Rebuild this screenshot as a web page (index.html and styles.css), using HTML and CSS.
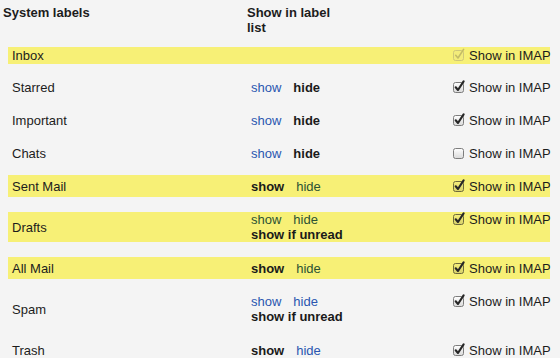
FILE: index.html
```html
<!DOCTYPE html>
<html lang="en">
<head>
  <meta charset="UTF-8">
  <title>Labels</title>
  <link rel="stylesheet" href="styles.css">
</head>
<body>
  <svg class="defs" width="0" height="0">
    <defs>
      <linearGradient id="cbfill" x1="0" y1="0" x2="0" y2="1">
        <stop offset="0" stop-color="#ffffff"/>
        <stop offset="1" stop-color="#d9d9d9"/>
      </linearGradient>
      <linearGradient id="cbfill-hl" x1="0" y1="0" x2="0" y2="1">
        <stop offset="0" stop-color="#f6ef7a"/>
        <stop offset="1" stop-color="#d6d06a"/>
      </linearGradient>
    </defs>
  </svg>

  <div class="labels">
    <div class="head">
      <div class="col-name">System labels</div>
      <div class="col-show">Show in label list</div>
    </div>

    <div class="row hl short">
      <div class="name">Inbox</div>
      <div class="vis"></div>
      <div class="imap disabled">
        <svg class="cb" width="12" height="13" viewBox="0 0 12 13"><rect class="box" x="0.5" y="2.5" width="10" height="10" rx="2"/><path class="mark" d="M2.7 7.3 L5 10 L10.6 1.4"/></svg>
        <span>Show in IMAP</span>
      </div>
    </div>

    <div class="row">
      <div class="name">Starred</div>
      <div class="vis"><a href="#">show</a><b>hide</b></div>
      <div class="imap">
        <svg class="cb" width="12" height="13" viewBox="0 0 12 13"><rect class="box" x="0.5" y="2.5" width="10" height="10" rx="2"/><path class="mark" d="M2.7 7.3 L5 10 L10.6 1.4"/></svg>
        <span>Show in IMAP</span>
      </div>
    </div>

    <div class="row">
      <div class="name">Important</div>
      <div class="vis"><a href="#">show</a><b>hide</b></div>
      <div class="imap">
        <svg class="cb" width="12" height="13" viewBox="0 0 12 13"><rect class="box" x="0.5" y="2.5" width="10" height="10" rx="2"/><path class="mark" d="M2.7 7.3 L5 10 L10.6 1.4"/></svg>
        <span>Show in IMAP</span>
      </div>
    </div>

    <div class="row">
      <div class="name">Chats</div>
      <div class="vis"><a href="#">show</a><b>hide</b></div>
      <div class="imap off">
        <svg class="cb" width="12" height="13" viewBox="0 0 12 13"><rect class="box" x="0.5" y="2.5" width="10" height="10" rx="2"/><path class="mark" d="M2.7 7.3 L5 10 L10.6 1.4"/></svg>
        <span>Show in IMAP</span>
      </div>
    </div>

    <div class="row hl">
      <div class="name">Sent Mail</div>
      <div class="vis"><b>show</b><a href="#">hide</a></div>
      <div class="imap">
        <svg class="cb" width="12" height="13" viewBox="0 0 12 13"><rect class="box" x="0.5" y="2.5" width="10" height="10" rx="2"/><path class="mark" d="M2.7 7.3 L5 10 L10.6 1.4"/></svg>
        <span>Show in IMAP</span>
      </div>
    </div>

    <div class="row hl two">
      <div class="name">Drafts</div>
      <div class="vis"><a href="#">show</a><a href="#">hide</a><br><b>show if unread</b></div>
      <div class="imap">
        <svg class="cb" width="12" height="13" viewBox="0 0 12 13"><rect class="box" x="0.5" y="2.5" width="10" height="10" rx="2"/><path class="mark" d="M2.7 7.3 L5 10 L10.6 1.4"/></svg>
        <span>Show in IMAP</span>
      </div>
    </div>

    <div class="row hl">
      <div class="name">All Mail</div>
      <div class="vis"><b>show</b><a href="#">hide</a></div>
      <div class="imap">
        <svg class="cb" width="12" height="13" viewBox="0 0 12 13"><rect class="box" x="0.5" y="2.5" width="10" height="10" rx="2"/><path class="mark" d="M2.7 7.3 L5 10 L10.6 1.4"/></svg>
        <span>Show in IMAP</span>
      </div>
    </div>

    <div class="row two">
      <div class="name">Spam</div>
      <div class="vis"><a href="#">show</a><a href="#">hide</a><br><b>show if unread</b></div>
      <div class="imap">
        <svg class="cb" width="12" height="13" viewBox="0 0 12 13"><rect class="box" x="0.5" y="2.5" width="10" height="10" rx="2"/><path class="mark" d="M2.7 7.3 L5 10 L10.6 1.4"/></svg>
        <span>Show in IMAP</span>
      </div>
    </div>

    <div class="row">
      <div class="name">Trash</div>
      <div class="vis"><b>show</b><a href="#">hide</a></div>
      <div class="imap">
        <svg class="cb" width="12" height="13" viewBox="0 0 12 13"><rect class="box" x="0.5" y="2.5" width="10" height="10" rx="2"/><path class="mark" d="M2.7 7.3 L5 10 L10.6 1.4"/></svg>
        <span>Show in IMAP</span>
      </div>
    </div>
  </div>
</body>
</html>
```

FILE: styles.css
```css
body {
  margin: 0;
  background: #f4f4f4;
  font-family: "Liberation Sans", Arial, sans-serif;
  font-size: 13px;
  line-height: 15px;
  color: #1c1c1c;
}
.defs {
  position: absolute;
}
.labels {
  display: flex;
  flex-direction: column;
  padding-top: 5px;
}
.head {
  display: flex;
  padding-left: 3px;
  font-weight: bold;
  margin-bottom: 12px;
}
.head .col-name {
  width: 244px;
  flex: none;
}
.head .col-show {
  width: 95px;
  flex: none;
}
.row {
  display: flex;
  align-items: flex-start;
  margin: 0 10px 11px 8px;
  padding: 4px 0 3px;
  white-space: nowrap;
}
.row.short {
  padding: 1px 0;
  margin-bottom: 12px;
}
.row.two {
  padding: 0;
  margin-top: 4px;
  margin-bottom: 15px;
}
.hl {
  background: #f7f076;
}
.name {
  flex: none;
  width: 239px;
  padding-left: 4px;
  align-self: center;
}
.vis {
  flex: none;
  width: 202px;
}
.vis a,
.vis b {
  margin-right: 12px;
}
.vis a {
  color: #2a56b0;
  text-decoration: none;
}
.hl .vis a {
  color: #2c5234;
}
.vis b {
  color: #1a1a1a;
}
.imap {
  flex: none;
  display: flex;
  gap: 4px;
}
.cb {
  display: block;
  flex: none;
}
.cb .box {
  fill: url(#cbfill);
  stroke: #7d7d7d;
  stroke-width: 1;
}
.cb .mark {
  fill: none;
  stroke: #262626;
  stroke-width: 2.1;
  stroke-linecap: round;
  stroke-linejoin: round;
}
.hl .cb .box {
  fill: url(#cbfill-hl);
  stroke: #6e6a3c;
}
.off .mark {
  display: none;
}
.hl .disabled .box {
  fill: #f3ec7a;
  stroke: #cfc779;
}
.hl .disabled .mark {
  stroke: #c4bc66;
  stroke-width: 1.6;
}
```
